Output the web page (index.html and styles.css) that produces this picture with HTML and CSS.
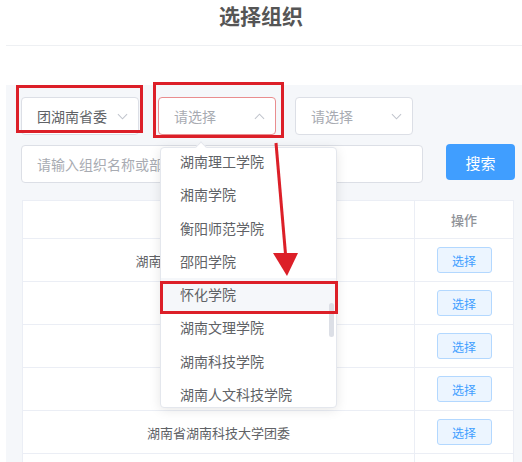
FILE: index.html
```html
<!DOCTYPE html>
<html lang="zh-CN">
<head>
<meta charset="utf-8">
<title>选择组织</title>
<link rel="stylesheet" href="styles.css">
</head>
<body>
<header class="title-bar"><h1 class="title">选择组织</h1></header>
<main class="panel">
  <div class="select-row">
    <div class="select"><span class="value">团湖南省委</span><svg class="chev" viewBox="0 0 12 7"><polyline points="1,1 6,6 11,1"/></svg></div>
    <div class="select focused"><span class="placeholder">请选择</span><svg class="chev" viewBox="0 0 12 7"><polyline points="1,6 6,1 11,6"/></svg></div>
    <div class="select"><span class="placeholder">请选择</span><svg class="chev" viewBox="0 0 12 7"><polyline points="1,1 6,6 11,1"/></svg></div>
  </div>
  <div class="search-row">
    <div class="input"><span class="placeholder">请输入组织名称或部</span></div>
    <button class="btn-search">搜索</button>
  </div>
  <table class="org-table">
    <thead><tr><th class="col-name"></th><th class="col-op">操作</th></tr></thead>
    <tbody>
      <tr><td><span class="clip">湖南</span></td><td class="op"><button class="btn-pick">选择</button></td></tr>
      <tr><td></td><td class="op"><button class="btn-pick">选择</button></td></tr>
      <tr><td></td><td class="op"><button class="btn-pick">选择</button></td></tr>
      <tr><td></td><td class="op"><button class="btn-pick">选择</button></td></tr>
      <tr><td>湖南省湖南科技大学团委</td><td class="op"><button class="btn-pick">选择</button></td></tr>
      <tr><td></td><td class="op"></td></tr>
    </tbody>
  </table>
</main>

<div class="dropdown">
  <span class="popper-arrow"></span>
  <ul class="options">
    <li>湖南理工学院</li>
    <li>湘南学院</li>
    <li>衡阳师范学院</li>
    <li>邵阳学院</li>
    <li class="hover">怀化学院</li>
    <li>湖南文理学院</li>
    <li>湖南科技学院</li>
    <li>湖南人文科技学院</li>
  </ul>
  <span class="thumb"></span>
</div>

<div class="mark mark-1"></div>
<div class="mark mark-2"></div>
<div class="mark mark-3"></div>
<svg class="arrow" viewBox="0 0 522 462" width="522" height="462">
  <line x1="276" y1="143" x2="285.5" y2="254" stroke="#dc1f28" stroke-width="3"/>
  <polygon points="273,253 298,253 287,276" fill="#dc1f28"/>
</svg>
</body>
</html>
```
FILE: styles.css
```css
* { box-sizing: border-box; }
html, body { margin: 0; padding: 0; background: #fff; }
body {
  width: 522px;
  height: 462px;
  overflow: hidden;
  position: relative;
  font-family: "Noto Sans CJK SC", "Noto Sans", sans-serif;
  color: #606266;
  font-size: 14px;
}
.title-bar {
  margin-left: 6px;
  height: 46px;
  border-bottom: 1px solid #eef0f3;
  display: flex;
  justify-content: center;
}
.title {
  margin: 0;
  padding-top: 1px;
  padding-right: 6px;
  font-size: 21px;
  line-height: 28px;
  font-weight: bold;
  color: #555;
}
.panel {
  margin: 39px 0 0 6px;
  background: #f5f7fa;
  padding: 12px 0 0 15px;
  height: 377px;
  overflow: hidden;
}
.select-row { display: flex; gap: 19px; }
.select {
  width: 118px;
  height: 38px;
  background: #fff;
  border: 1px solid #dcdfe6;
  border-radius: 4px;
  display: flex;
  align-items: center;
  justify-content: space-between;
  padding: 0 10px 0 15px;
}
.select.focused { border-color: #e98d8f; }
.value { color: #606266; }
.placeholder { color: #a8abb2; white-space: nowrap; }
.chev { width: 11px; height: 7px; }
.chev polyline { fill: none; stroke: #c0c4cc; stroke-width: 1.1; }
.search-row {
  display: flex;
  align-items: flex-start;
  margin-top: 10px;
}
.input {
  width: 402px;
  height: 38px;
  background: #fff;
  border: 1px solid #dcdfe6;
  border-radius: 4px;
  display: flex;
  align-items: center;
  padding-left: 15px;
  overflow: hidden;
}
.btn-search {
  margin-left: 23px;
  margin-top: -1px;
  width: 69px;
  height: 36px;
  border: none;
  border-radius: 4px;
  background: #409eff;
  color: #fff;
  font-family: inherit;
  font-size: 15px;
}
.org-table {
  margin: 17px 0 0 1px;
  width: 491px;
  border-collapse: collapse;
  background: #fff;
  table-layout: fixed;
  font-size: 13px;
}
.org-table th, .org-table td {
  border: 1px solid #ebeef5;
  border-top: none;
  text-align: center;
  padding: 0;
}
.org-table tr:first-child th { border-top: 1px solid #ebeef5; }
.col-name { width: 392px; }
.col-op { width: 99px; }
.org-table th {
  height: 38px;
  color: #909399;
  font-weight: 500;
}
.org-table td { height: 43px; color: #606266; }
.clip {
  display: inline-block;
  width: 166px;
  text-align: left;
}
.btn-pick {
  width: 55px;
  height: 26px;
  background: #ecf5ff;
  border: 1px solid #b3d8ff;
  border-radius: 3px;
  color: #409eff;
  font-family: inherit;
  font-size: 12px;
  padding: 0;
  vertical-align: middle;
}
.dropdown {
  position: absolute;
  left: 160px;
  top: 147px;
  width: 177px;
  height: 261px;
  background: #fff;
  border: 1px solid #e4e7ed;
  border-radius: 4px;
  box-shadow: 0 2px 12px rgba(0,0,0,0.1);
}
.options {
  list-style: none;
  margin: -3px 0 0 0;
  padding: 0;
  height: 259px;
  overflow: hidden;
}
.options li {
  height: 33.3px;
  line-height: 33.3px;
  padding-left: 19px;
  color: #606266;
  font-size: 14px;
  white-space: nowrap;
}
.options li.hover { background: #f5f7fa; }
.popper-arrow {
  position: absolute;
  left: 36px;
  top: -5px;
  width: 8px;
  height: 8px;
  background: #fff;
  border-left: 1px solid #e4e7ed;
  border-top: 1px solid #e4e7ed;
  transform: rotate(45deg);
}
.thumb {
  position: absolute;
  left: 168px;
  top: 155px;
  width: 5px;
  height: 34px;
  background: #dcdfe6;
  border-radius: 3px;
}
.mark {
  position: absolute;
  border: 3px solid #dc1f28;
}
.mark-1 { left: 16px; top: 85px; width: 127px; height: 48px; }
.mark-2 { left: 153px; top: 82px; width: 131px; height: 56px; }
.mark-3 { left: 160px; top: 281px; width: 178px; height: 33px; }
.arrow { position: absolute; left: 0; top: 0; pointer-events: none; }
```
